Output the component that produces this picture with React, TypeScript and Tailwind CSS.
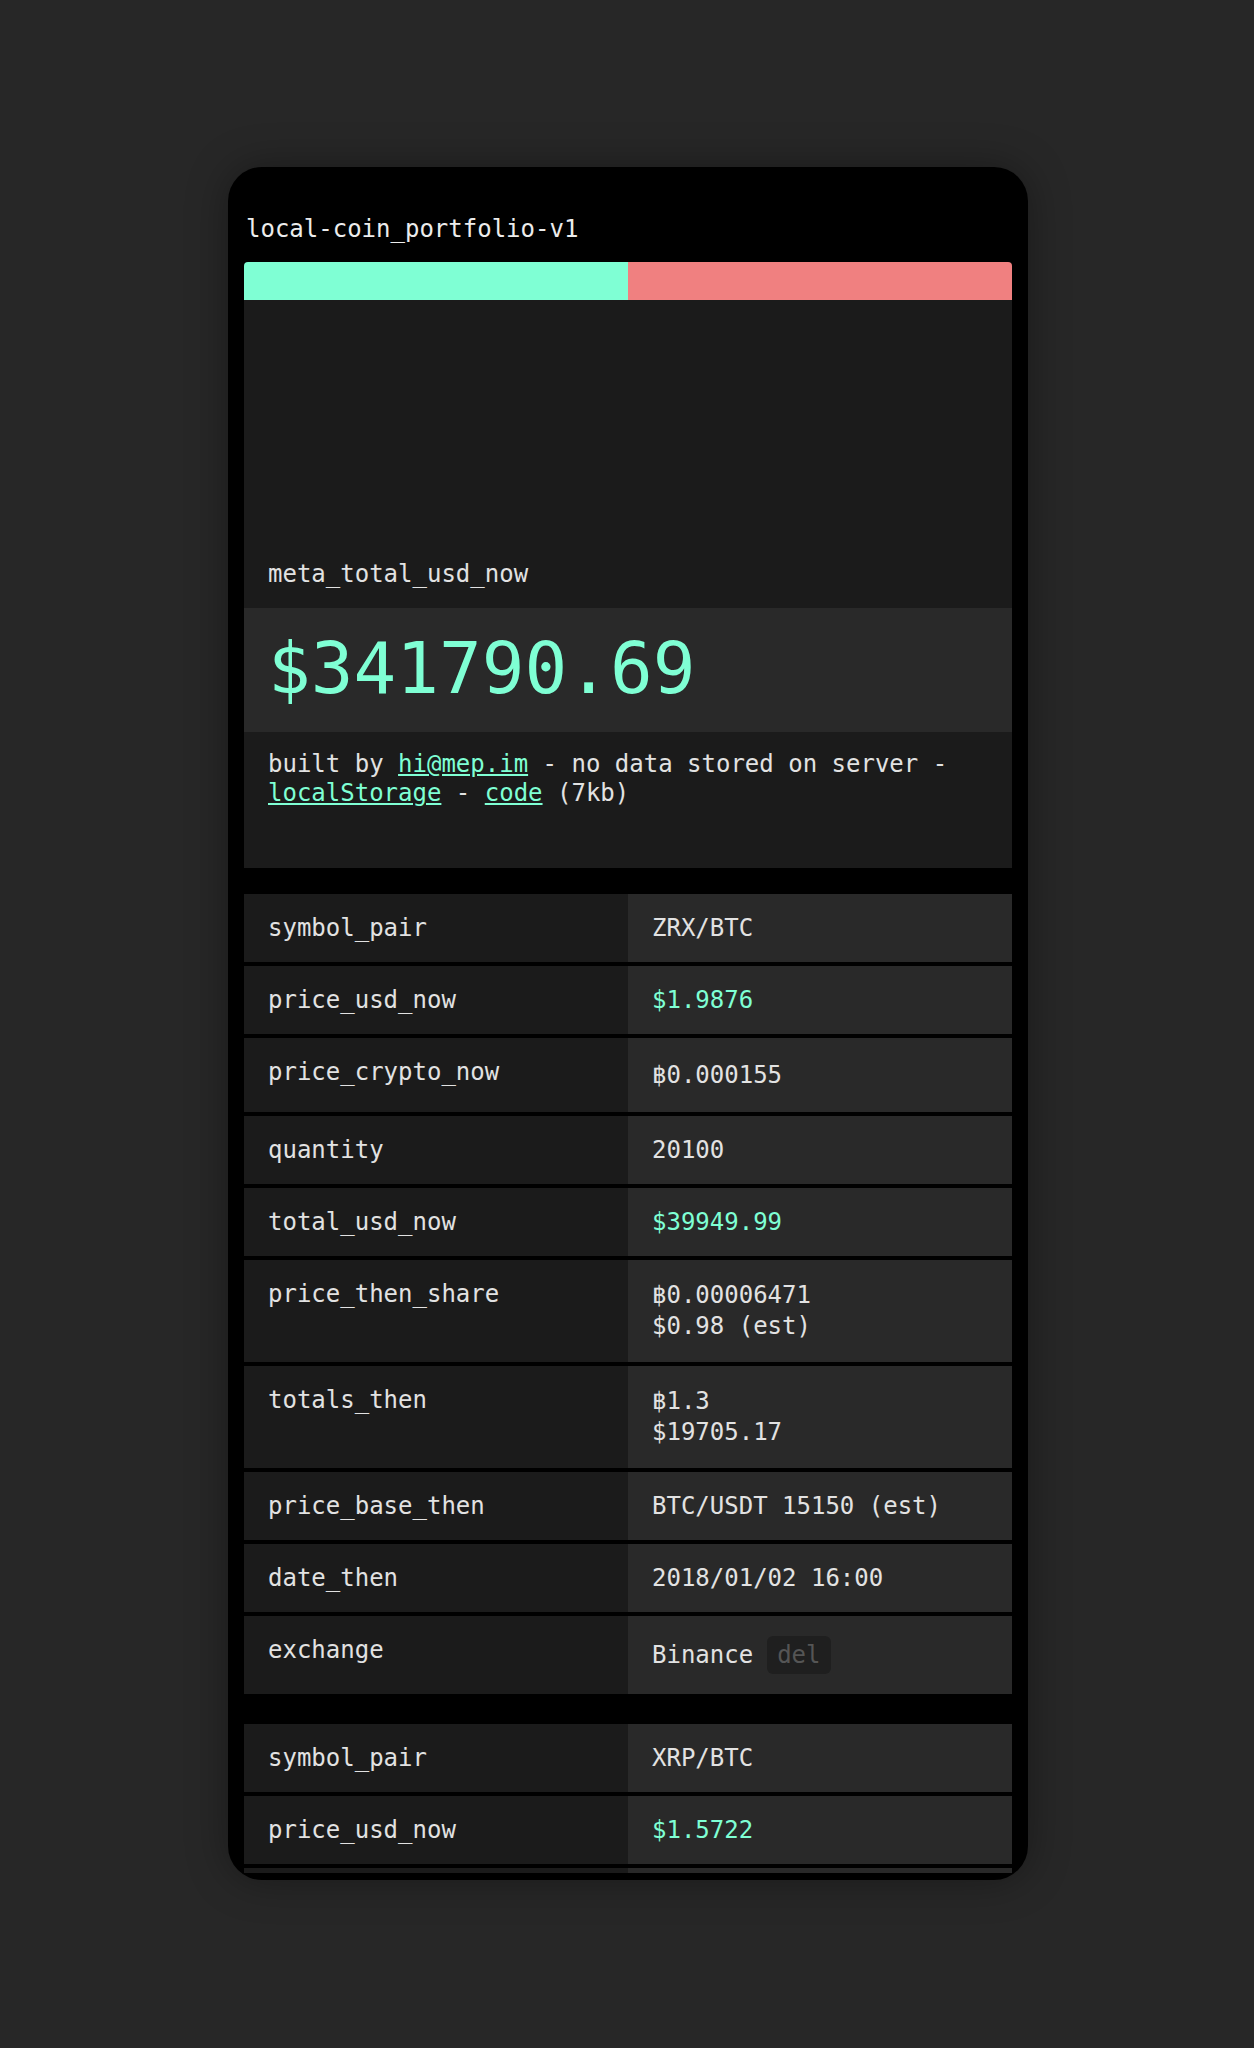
import React from "react";

const GREEN = "text-[#7fffd4]";

type Row = {
  label: string;
  value: React.ReactNode;
  kind?: "single" | "baht" | "double" | "exchange";
};

function Value({ row }: { row: Row }) {
  if (row.kind === "exchange") {
    return (
      <div className="bg-[#292929] px-6 py-[20px] flex items-center">
        {row.value}
      </div>
    );
  }
  const lead =
    row.kind === "baht"
      ? "leading-[34px]"
      : row.kind === "double"
      ? "leading-[31px]"
      : "leading-[28px]";
  return (
    <div className={`bg-[#292929] px-6 py-[20px] ${lead}`}>{row.value}</div>
  );
}

function Table({ rows }: { rows: Row[] }) {
  return (
    <div className="flex flex-col gap-[4px]">
      {rows.map((r, i) => (
        <div key={i} className="grid grid-cols-2">
          <div className="bg-[#1b1b1b] px-6 py-[20px] leading-[28px] min-h-[68px]">
            {r.label}
          </div>
          <Value row={r} />
        </div>
      ))}
    </div>
  );
}

export default function App() {
  const rows1: Row[] = [
    { label: "symbol_pair", value: "ZRX/BTC" },
    { label: "price_usd_now", value: <span className={GREEN}>$1.9876</span> },
    { label: "price_crypto_now", value: "฿0.000155", kind: "baht" },
    { label: "quantity", value: "20100" },
    { label: "total_usd_now", value: <span className={GREEN}>$39949.99</span> },
    {
      label: "price_then_share",
      value: (
        <>
          <div>฿0.00006471</div>
          <div>$0.98 (est)</div>
        </>
      ),
      kind: "double",
    },
    {
      label: "totals_then",
      value: (
        <>
          <div>฿1.3</div>
          <div>$19705.17</div>
        </>
      ),
      kind: "double",
    },
    { label: "price_base_then", value: "BTC/USDT 15150 (est)" },
    { label: "date_then", value: "2018/01/02 16:00" },
    {
      label: "exchange",
      kind: "exchange",
      value: (
        <>
          <span className="leading-[28px]">Binance</span>
          <span className="ml-[14px] h-[38px] px-[10px] rounded-[6px] bg-[#1f1f1f] text-[#555555] flex items-center leading-[28px]">
            del
          </span>
        </>
      ),
    },
  ];
  const rows2: Row[] = [
    { label: "symbol_pair", value: "XRP/BTC" },
    { label: "price_usd_now", value: <span className={GREEN}>$1.5722</span> },
    { label: "", value: "" },
  ];

  return (
    <div
      className="min-h-[2048px] bg-[#272727] pt-[167px] text-[24px] text-[#e2e2e2]"
      style={{ fontFamily: '"DejaVu Sans Mono", "Liberation Mono", monospace' }}
    >
      <div className="ml-[228px] w-[800px] h-[1713px] bg-black rounded-[34px] px-4 pb-[7px] flex flex-col overflow-hidden shadow-[0_0_40px_rgba(0,0,0,0.35)]">
        <div className="flex-1 min-h-0 overflow-hidden">
          <div className="pt-[48px] pl-[2px] leading-[28px] mb-[19px] text-[#ececec]">
            local-coin_portfolio-v1
          </div>
          <div className="h-[38px] flex rounded-t-[4px] overflow-hidden">
            <div className="flex-1 bg-[#7fffd4]" />
            <div className="flex-1 bg-[#f08080]" />
          </div>
          <div className="h-[308px] bg-[#1b1b1b] flex flex-col justify-end px-6 pb-[20px] leading-[28px]">
            meta_total_usd_now
          </div>
          <div className={`bg-[#292929] px-6 pt-[25px] pb-[27px] text-[71px] leading-[72px] ${GREEN}`}>
            $341790.69
          </div>
          <div className="bg-[#1b1b1b] px-6 pt-[18px] pb-[60px] leading-[29px]">
            built by{" "}
            <a className={`${GREEN} underline`} href="#">
              hi@mep.im
            </a>{" "}
            - no data stored on server -{" "}
            <a className={`${GREEN} underline`} href="#">
              localStorage
            </a>{" "}
            -{" "}
            <a className={`${GREEN} underline`} href="#">
              code
            </a>{" "}
            (7kb)
          </div>
          <div className="mt-[26px]">
            <Table rows={rows1} />
          </div>
          <div className="mt-[30px]">
            <Table rows={rows2} />
          </div>
        </div>
      </div>
    </div>
  );
}
